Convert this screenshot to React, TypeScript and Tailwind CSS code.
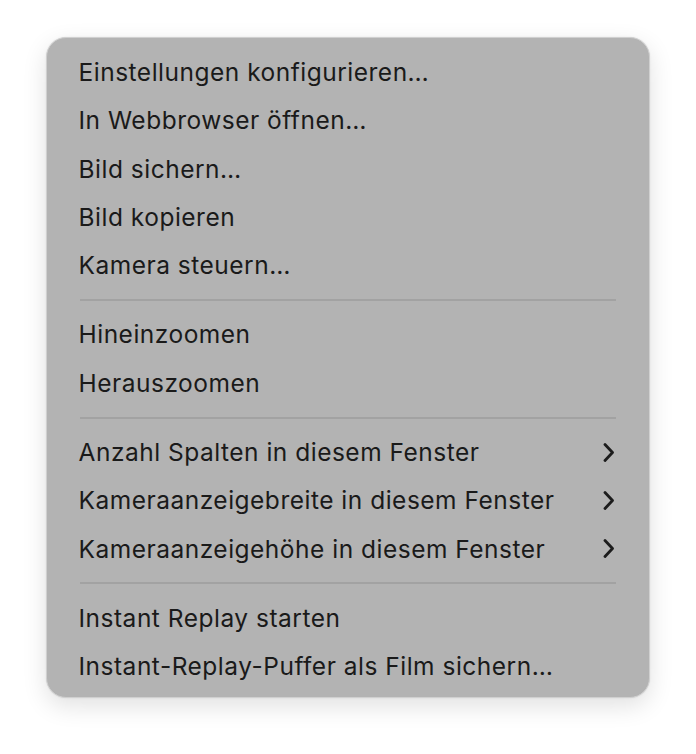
import React from "react";

type Item = { label: string; submenu?: boolean };

const groups: Item[][] = [
  [
    { label: "Einstellungen konfigurieren…" },
    { label: "In Webbrowser öffnen…" },
    { label: "Bild sichern…" },
    { label: "Bild kopieren" },
    { label: "Kamera steuern…" },
  ],
  [{ label: "Hineinzoomen" }, { label: "Herauszoomen" }],
  [
    { label: "Anzahl Spalten in diesem Fenster", submenu: true },
    { label: "Kameraanzeigebreite in diesem Fenster", submenu: true },
    { label: "Kameraanzeigehöhe in diesem Fenster", submenu: true },
  ],
  [
    { label: "Instant Replay starten" },
    { label: "Instant-Replay-Puffer als Film sichern…" },
  ],
];

function Chevron() {
  return (
    <svg width="12" height="19" viewBox="0 0 12 19" fill="none" className="shrink-0">
      <path
        d="M2 1.5 L9.5 9.5 L2 17.5"
        stroke="#1c1c1c"
        strokeWidth="2.8"
        strokeLinecap="round"
        strokeLinejoin="round"
      />
    </svg>
  );
}

function MenuRow({ item }: { item: Item }) {
  return (
    <div className="flex h-[48.4px] items-center justify-between pl-[31.5px] pr-[34px]">
      <span className="text-[24.5px] tracking-[0.5px] text-[#1a1a1a]">{item.label}</span>
      {item.submenu && <Chevron />}
    </div>
  );
}

export default function App() {
  return (
    <div
      className="flex min-h-[754px] w-[696px] items-start justify-center bg-white pt-[37px]"
      style={{ fontFamily: "Inter, 'Noto Sans', sans-serif" }}
    >
      <div className="w-[604px] rounded-[20px] border border-[#d0d0d0] bg-[#b3b3b3] pt-[10px] pb-[7px] shadow-[0_8px_24px_rgba(0,0,0,0.12),0_0_2px_rgba(0,0,0,0.08)]">
        {groups.map((group, gi) => (
          <React.Fragment key={gi}>
            {gi > 0 && (
              <div className="flex h-[20.6px] items-center px-[33px]">
                <div className="h-[2px] w-full bg-[#a2a2a2]" />
              </div>
            )}
            {group.map((item) => (
              <MenuRow key={item.label} item={item} />
            ))}
          </React.Fragment>
        ))}
      </div>
    </div>
  );
}
